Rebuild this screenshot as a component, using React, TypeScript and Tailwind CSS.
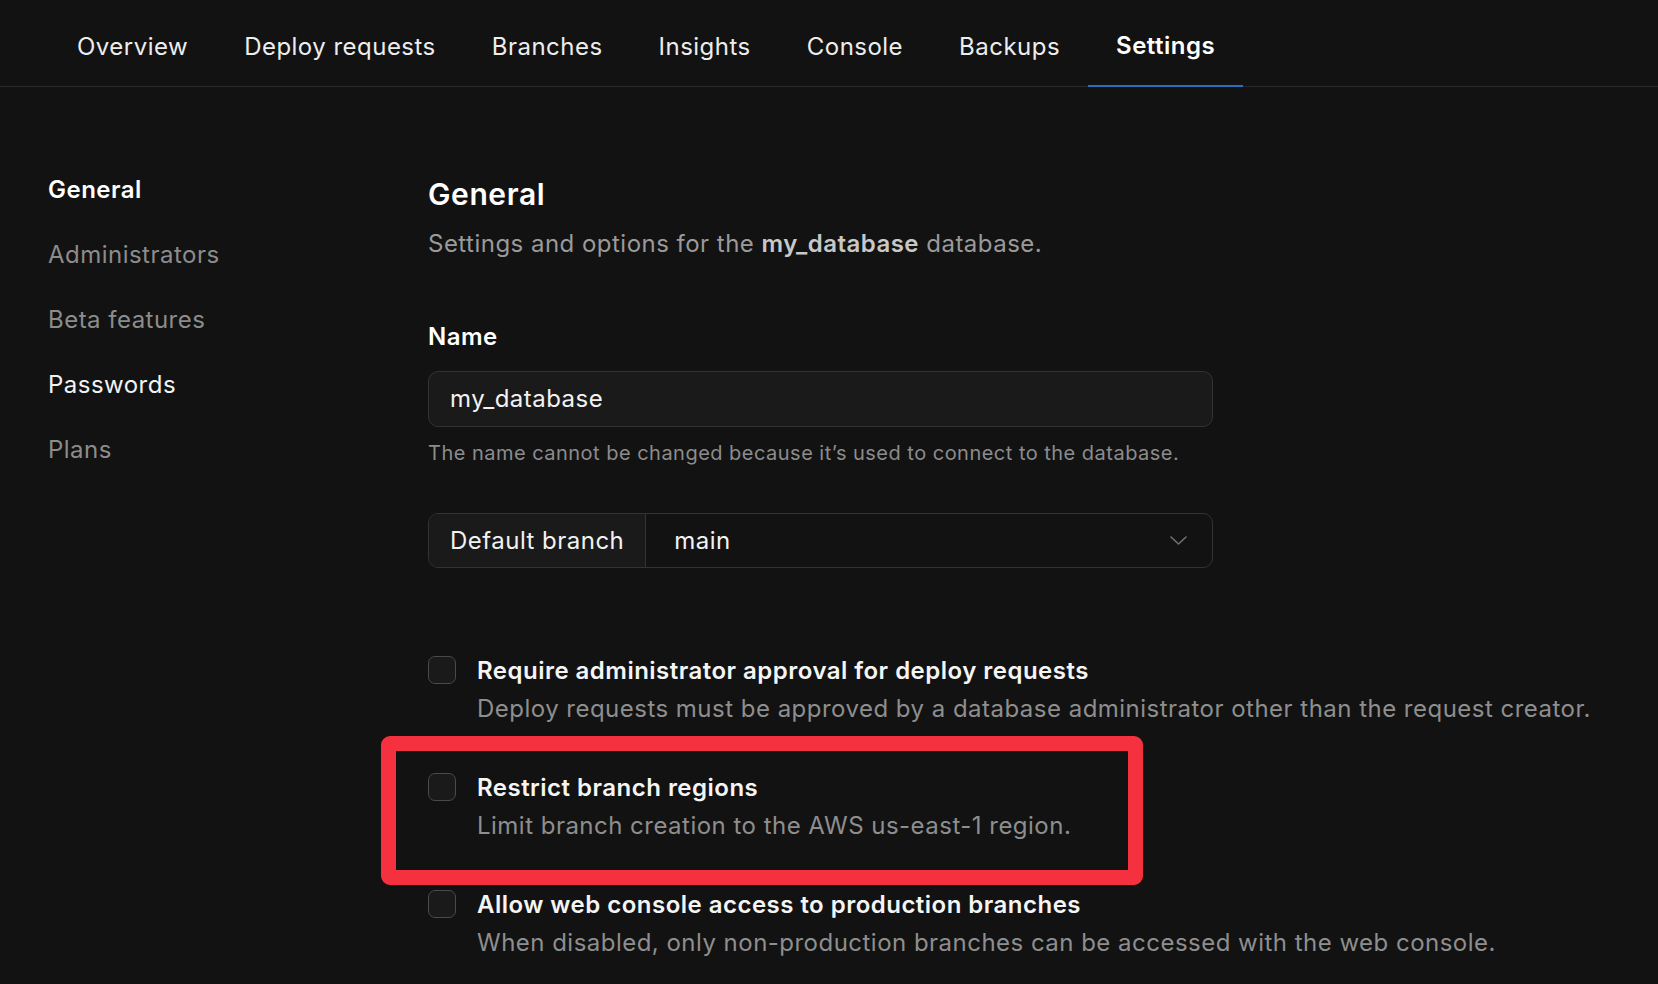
import React from "react";

const tabs = ["Overview", "Deploy requests", "Branches", "Insights", "Console", "Backups", "Settings"];

const sideLinks = [
  { label: "General", cls: "text-white font-semibold" },
  { label: "Administrators", cls: "text-[#8c8c8c]" },
  { label: "Beta features", cls: "text-[#8c8c8c]" },
  { label: "Passwords", cls: "text-[#f2f2f2]" },
  { label: "Plans", cls: "text-[#8c8c8c]" },
];

function Checkbox() {
  return <div className="mt-[4px] h-[28px] w-[28px] shrink-0 rounded-[7px] border border-[#4a4a4a] bg-[#1a1a1a]" />;
}

function Option({ title, desc, marked }: { title: string; desc: string; marked?: boolean }) {
  return (
    <div className="relative flex gap-[21px]">
      {marked && (
        // annotation frame drawn over the row
        <div className="pointer-events-none absolute left-[-47px] top-[-33px] h-[149px] w-[762px] rounded-[9px] border-[15px] border-[#f5313f]" />
      )}
      <Checkbox />
      <div>
        <div className="text-[24px] leading-[38px] font-semibold text-[#f5f5f5]">{title}</div>
        <div className="text-[24px] leading-[38px] text-[#8e8e8e]">{desc}</div>
      </div>
    </div>
  );
}

export default function App() {
  return (
    <div className="min-h-screen bg-[#121212] font-['Inter',sans-serif] tracking-[0.03em] text-white">
      {/* Top tabs */}
      <nav className="flex h-[87px] border-b border-[#2a2a2a] pl-[49px]">
        {tabs.map((t) => {
          const active = t === "Settings";
          return (
            <div
              key={t}
              className={
                active
                  ? "relative -mb-px flex items-center border-b-2 border-[#2a6ec0] px-[28px] pt-[6px] text-[24px] font-semibold text-white"
                  : "flex items-center px-[28px] pt-[7px] text-[24px] text-[#ededed]"
              }
            >
              {t}
            </div>
          );
        })}
      </nav>

      <div className="flex pl-[48px] pt-[85px]">
        {/* Sidebar */}
        <aside className="flex w-[380px] shrink-0 flex-col gap-[29px]">
          {sideLinks.map((l) => (
            <div key={l.label} className={`text-[24px] leading-[36px] ${l.cls}`}>
              {l.label}
            </div>
          ))}
        </aside>

        {/* Main */}
        <main className="flex flex-col pt-[4px]">
          <h1 className="text-[30px] leading-[36px] font-semibold tracking-[0.02em] text-white">General</h1>
          <p className="mt-[14px] text-[24px] leading-[36px] text-[#9a9a9a]">
            Settings and options for the <span className="font-semibold text-[#c8c8c8]">my_database</span> database.
          </p>

          <label className="mt-[57px] text-[24px] leading-[36px] font-semibold text-white">Name</label>
          <div className="mt-[16px] flex h-[56px] w-[785px] items-center rounded-[10px] border border-[#333333] bg-[#1a1a1a] px-[21px] text-[24px] text-[#f2f2f2]">
            my_database
          </div>
          <p className="mt-[11px] text-[20px] leading-[30px] text-[#8c8c8c]">
            The name cannot be changed because it’s used to connect to the database.
          </p>

          <div className="mt-[45px] flex h-[55px] w-[785px] overflow-hidden rounded-[10px] border border-[#333333]">
            <div className="flex items-center border-r border-[#333333] bg-[#1a1a1a] px-[21px] text-[24px] text-[#f2f2f2]">
              Default branch
            </div>
            <div className="flex flex-1 items-center justify-between pl-[28px] pr-[25px] text-[24px] text-[#f2f2f2]">
              <span>main</span>
              <svg width="17" height="9" viewBox="0 0 17 9" fill="none" className="text-[#707070]">
                <path d="M1 1l7.5 7L16 1" stroke="currentColor" strokeWidth="1.6" strokeLinecap="round" strokeLinejoin="round" />
              </svg>
            </div>
          </div>

          <div className="mt-[84px] flex flex-col gap-[41px]">
            <Option
              title="Require administrator approval for deploy requests"
              desc="Deploy requests must be approved by a database administrator other than the request creator."
            />
            <Option title="Restrict branch regions" desc="Limit branch creation to the AWS us-east-1 region." marked />
            <Option
              title="Allow web console access to production branches"
              desc="When disabled, only non-production branches can be accessed with the web console."
            />
          </div>
        </main>
      </div>
    </div>
  );
}
